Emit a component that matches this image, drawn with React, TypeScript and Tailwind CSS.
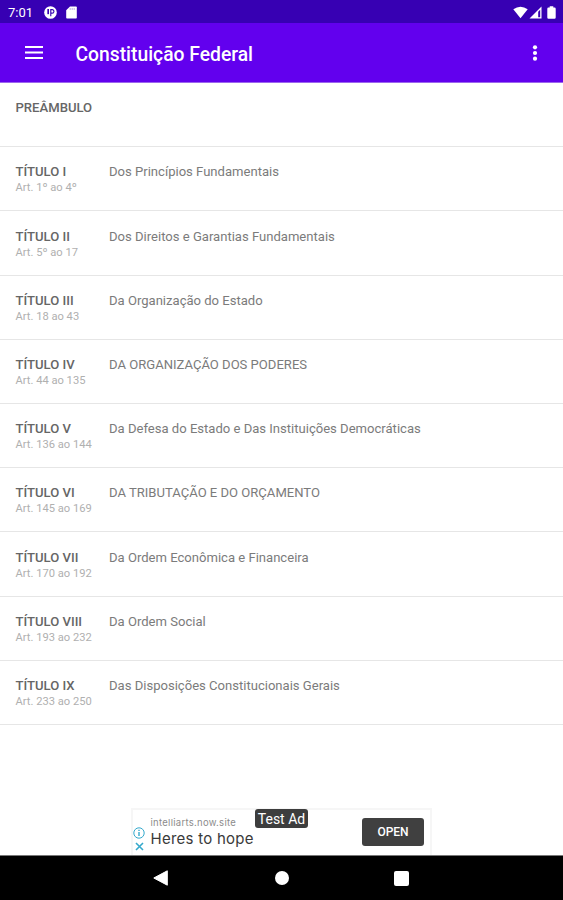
import React from 'react';

interface Section {
  title: string;
  articles?: string;
  name?: string;
}

const sections: Section[] = [
  { title: 'PREÂMBULO' },
  { title: 'TÍTULO I', articles: 'Art. 1º ao 4º', name: 'Dos Princípios Fundamentais' },
  { title: 'TÍTULO II', articles: 'Art. 5º ao 17', name: 'Dos Direitos e Garantias Fundamentais' },
  { title: 'TÍTULO III', articles: 'Art. 18 ao 43', name: 'Da Organização do Estado' },
  { title: 'TÍTULO IV', articles: 'Art. 44 ao 135', name: 'DA ORGANIZAÇÃO DOS PODERES' },
  { title: 'TÍTULO V', articles: 'Art. 136 ao 144', name: 'Da Defesa do Estado e Das Instituições Democráticas' },
  { title: 'TÍTULO VI', articles: 'Art. 145 ao 169', name: 'DA TRIBUTAÇÃO E DO ORÇAMENTO' },
  { title: 'TÍTULO VII', articles: 'Art. 170 ao 192', name: 'Da Ordem Econômica e Financeira' },
  { title: 'TÍTULO VIII', articles: 'Art. 193 ao 232', name: 'Da Ordem Social' },
  { title: 'TÍTULO IX', articles: 'Art. 233 ao 250', name: 'Das Disposições Constitucionais Gerais' },
];

const StatusBar = () => (
  <div className="flex h-[23px] shrink-0 items-center bg-[#3700b3] pl-2 pr-[7px] pt-[1px] text-white">
    <span className="w-[36px] text-[13px] leading-none">7:01</span>
    <svg className="h-[13px] w-[13px]" viewBox="0 0 14 14">
      <circle cx="7" cy="7" r="6.8" fill="white" />
      <path d="M3.6 3.2h1.8v5.6H3.6z" fill="#3700b3" />
      <path d="M7.3 11V3.9h1.5a1.9 1.9 0 0 1 0 3.8H7.3" fill="none" stroke="#3700b3" strokeWidth="1.2" />
    </svg>
    <svg className="ml-[9px] h-[13px] w-[11px]" viewBox="0 0 11 13">
      <path d="M4 .5h6a.8.8 0 0 1 .8.8v10.4a.8.8 0 0 1-.8.8H1a.8.8 0 0 1-.8-.8V4.3z" fill="white" />
      <path d="M4.2 2.2v1.6M6.2 2.2v1.6M8.2 2.2v1.6" stroke="#3700b3" strokeWidth=".4" />
    </svg>
    <div className="ml-auto flex items-center">
      <svg className="h-[13px] w-[15px]" viewBox="0 0 15 13">
        <path d="M.3 3.2Q7.5-1.8 14.7 3.2L7.5 12.3z" fill="white" />
      </svg>
      <svg className="ml-px h-[13px] w-[13px]" viewBox="0 0 13 13">
        <path d="M.5 12.5 12.5.5v12z" fill="white" />
        <path d="M9.2 5.8 11.2 3.8v7.4h-2z" fill="#3700b3" />
      </svg>
      <svg className="ml-[5px] h-[13px] w-[9px]" viewBox="0 0 9 13">
        <path d="M2.7.3h3.6v1.2h1.2q1.2 0 1.2 1.2v8.8q0 1.2-1.2 1.2h-6Q.3 12.7.3 11.5V2.7q0-1.2 1.2-1.2h1.2z" fill="white" />
      </svg>
    </div>
  </div>
);

const AppBar = () => (
  <header className="flex h-[60px] shrink-0 items-center border-b border-[#9c66ee] bg-[#6200ee] pl-[25px] pr-[25px] text-white">
    <button aria-label="Menu">
      <svg className="h-[13px] w-[18px]" viewBox="0 0 18 13">
        <path d="M0 1h18M0 6.5h18M0 12h18" stroke="white" strokeWidth="2" />
      </svg>
    </button>
    <h1 className="ml-[32.5px] mt-[4px] text-[19.3px] font-medium leading-6">Constituição Federal</h1>
    <button className="ml-auto" aria-label="Mais opções">
      <svg className="h-[16px] w-[6px]" viewBox="0 0 6 16">
        <circle cx="3" cy="2.3" r="2.1" fill="white" />
        <circle cx="3" cy="8" r="2.1" fill="white" />
        <circle cx="3" cy="13.7" r="2.1" fill="white" />
      </svg>
    </button>
  </header>
);

const SectionRow = ({ title, articles, name }: Section) => (
  <li className="flex h-[64.2px] border-b border-[#e6e6e6] pl-[15.5px] pt-[16.2px]">
    <div className="w-[93.5px] shrink-0">
      <div className="text-[13.1px] font-medium leading-[17px] text-[#666]">{title}</div>
      {articles && <div className="whitespace-nowrap text-[11.15px] leading-[15px] text-[#b0b0b0]">{articles}</div>}
    </div>
    {name && <div className="text-[13.07px] leading-[17px] text-[#7b7b7b]">{name}</div>}
  </li>
);

const AdBanner = () => (
  <div className="relative mx-auto mt-auto flex h-[47px] w-[301px] shrink-0 border-2 border-b-0 border-[#f6f6f6] bg-white">
    <div className="flex w-[17px] shrink-0 flex-col items-start pt-[17px]">
      <svg className="h-[12px] w-[12px]" viewBox="0 0 12 12" fill="none" stroke="#35a9cc">
        <circle cx="6" cy="6" r="5.2" />
        <path d="M6 5v4M6 2.7v1.2" strokeWidth="1.4" />
      </svg>
      <svg className="ml-[2px] mt-[3px] h-[9px] w-[9px]" viewBox="0 0 9 9" fill="none" stroke="#35a9cc" strokeWidth="1.6">
        <path d="m1 1 7 7M8 1 1 8" />
      </svg>
    </div>
    <div className="whitespace-nowrap pl-[0.5px] pt-[6px] font-['Inter',sans-serif]">
      <div className="text-[9.5px] leading-[13px] tracking-[0.28px] text-[#8c8c8c]">intelliarts.now.site</div>
      <div className="mt-px text-[15px] leading-[18px] tracking-[0.25px] text-[#3a3a3a]">Heres to hope</div>
    </div>
    <button className="ml-auto mr-[6px] mt-[8px] h-[28px] w-[62px] rounded-[3px] bg-[#404040] text-[12px] font-medium text-white">
      OPEN
    </button>
    <span className="absolute left-[122px] top-[-1px] flex h-[19px] w-[53px] items-center justify-center whitespace-nowrap rounded-[3px] bg-[#3d3d3d] text-[14px] leading-none text-white">
      Test Ad
    </span>
  </div>
);

const NavigationBar = () => (
  <nav className="flex h-[45px] shrink-0 items-center border-t border-[#777] bg-black pl-[153px] text-white">
    <svg className="h-[16px] w-[15px]" viewBox="0 0 15 16">
      <path d="M14.3.8v14.4L.8 8z" fill="white" stroke="white" strokeLinejoin="round" />
    </svg>
    <div className="ml-[107px] h-[14px] w-[14px] rounded-full bg-white" />
    <div className="ml-[105px] h-[15px] w-[15px] rounded-[2px] bg-white" />
  </nav>
);

export default function App() {
  return (
    <div className="flex h-[900px] w-[563px] flex-col overflow-hidden bg-white font-['Roboto',sans-serif]">
      <StatusBar />
      <AppBar />
      <ul className="shrink-0">
        {sections.map((section) => (
          <SectionRow key={section.title} {...section} />
        ))}
      </ul>
      <AdBanner />
      <NavigationBar />
    </div>
  );
}
